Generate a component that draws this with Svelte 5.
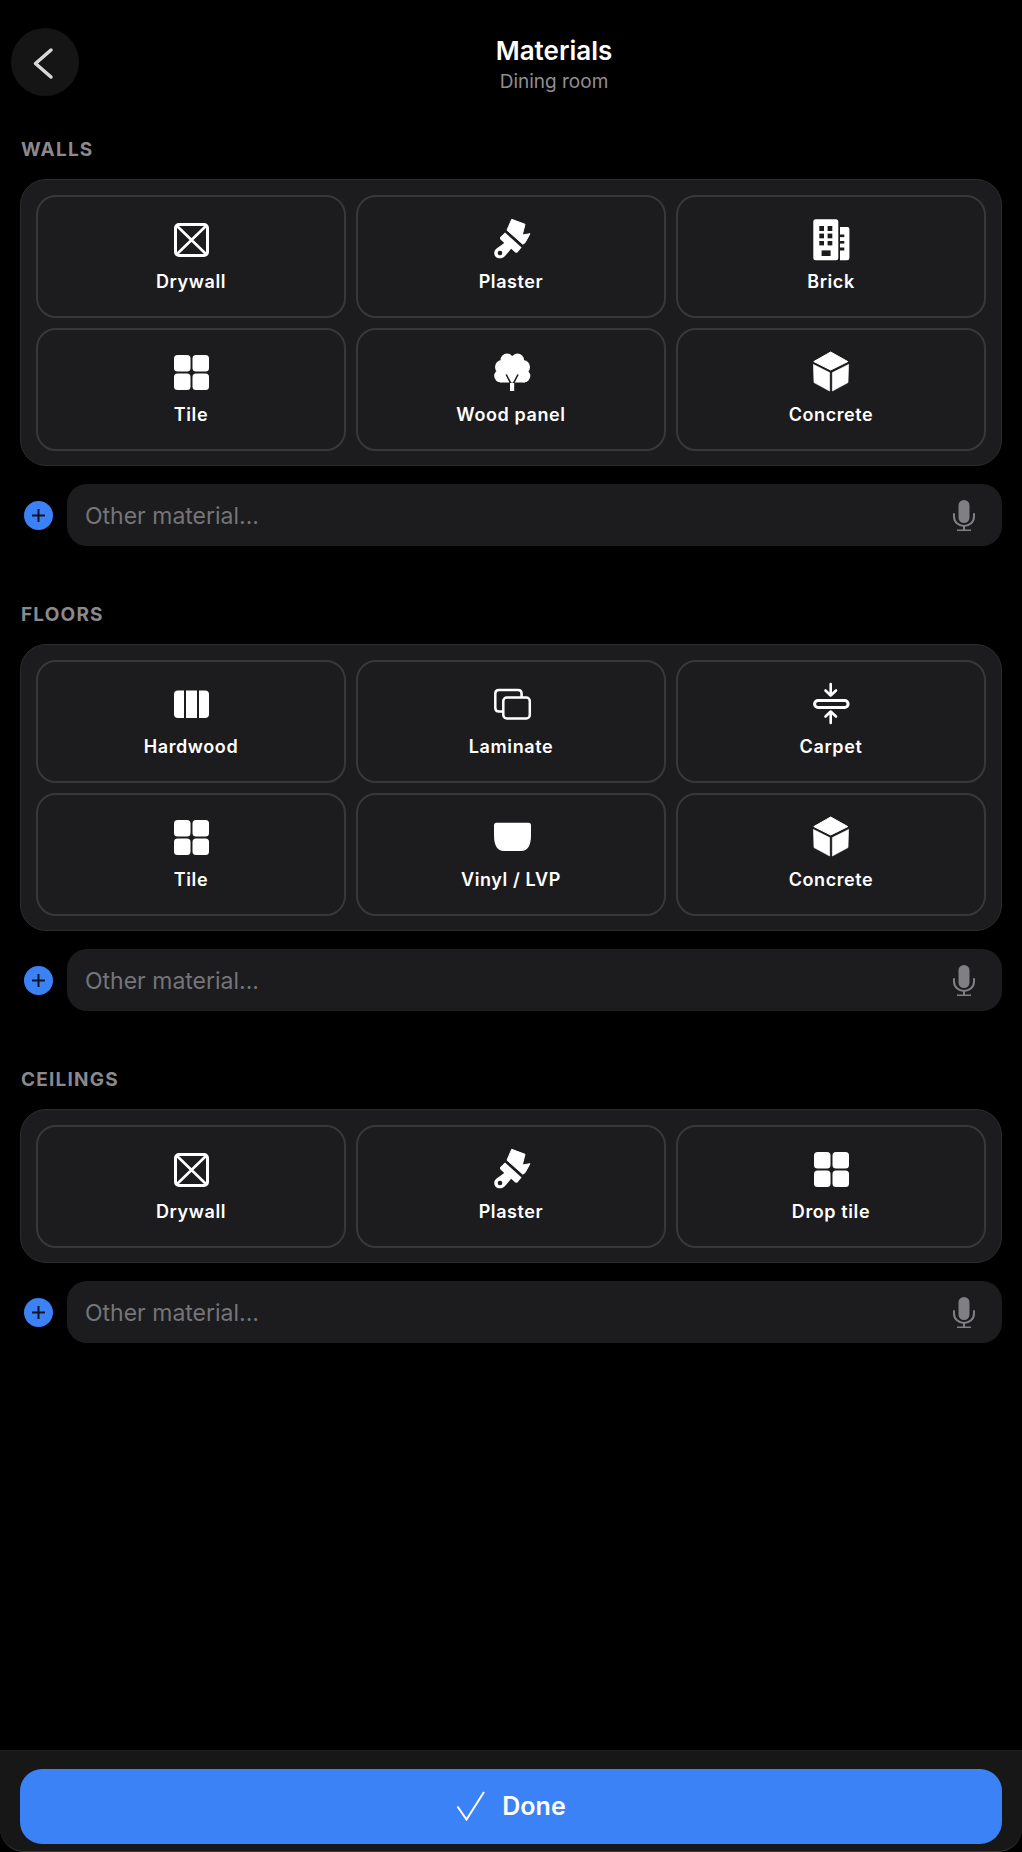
<script>
  const sections = [
    {
      title: "Walls",
      items: [
        { label: "Drywall", icon: "drywall" },
        { label: "Plaster", icon: "plaster" },
        { label: "Brick", icon: "brick" },
        { label: "Tile", icon: "tile" },
        { label: "Wood panel", icon: "tree" },
        { label: "Concrete", icon: "cube" }
      ]
    },
    {
      title: "Floors",
      items: [
        { label: "Hardwood", icon: "planks" },
        { label: "Laminate", icon: "laminate" },
        { label: "Carpet", icon: "carpet" },
        { label: "Tile", icon: "tile" },
        { label: "Vinyl / LVP", icon: "vinyl" },
        { label: "Concrete", icon: "cube" }
      ]
    },
    {
      title: "Ceilings",
      items: [
        { label: "Drywall", icon: "drywall" },
        { label: "Plaster", icon: "plaster" },
        { label: "Drop tile", icon: "tile" }
      ]
    }
  ];
</script>

{#snippet icon(name)}
  <svg class="icon" viewBox="0 0 40 40" fill="#fff">
    {#if name === "drywall"}
      <rect x="4.500" y="4.500" width="32" height="31" rx="3.500" fill="none" stroke="#fff" stroke-width="3" />
      <path d="M5 5l31 30M36 5L5 35" fill="none" stroke="#fff" stroke-width="2.600" />
    {:else if name === "plaster"}
      <path d="M20.700 -0.700L34 4.300L31.300 15L39 13.700L34 22.700L31.800 24.200L16 10.200z" stroke="#fff" stroke-width="1" stroke-linejoin="round" />
      <path d="M14 12.500L30.600 27.500L26.600 32.200C26 32.900 25 33 24.300 32.400L20.200 28.800L14 36C11.500 39 6.500 39 4.400 36.400C2.400 34 3 30.400 5.600 28.600L13.200 23L9.500 19.400C8.800 18.700 8.800 17.700 9.400 17z" />
      <circle cx="9" cy="33" r="2.300" fill="#1c1c1e" />
    {:else if name === "brick"}
      <rect x="2.300" y="-0.700" width="25" height="41" rx="2.500" />
      <path d="M29 7H36.500Q38.400 7 38.400 9V38Q38.400 40.300 36 40.300H29z" />
      <g fill="#1c1c1e">
        <rect x="8.300" y="6" width="4.700" height="5" />
        <rect x="16.600" y="6" width="4.700" height="5" />
        <rect x="8.300" y="13.600" width="4.700" height="4.700" />
        <rect x="16.600" y="13.600" width="4.700" height="4.700" />
        <rect x="8.300" y="21" width="4.700" height="4.400" />
        <rect x="16.600" y="21" width="4.700" height="4.400" />
        <rect x="10.600" y="30.400" width="9" height="5.600" />
        <rect x="29" y="14.500" width="4.300" height="2.600" />
        <rect x="29" y="21" width="4.300" height="2.600" />
        <rect x="29" y="27.500" width="4.300" height="3" />
      </g>
    {:else if name === "tile"}
      <rect x="3" y="2" width="16.500" height="16.500" rx="3.500" />
      <rect x="21.500" y="2" width="16.500" height="16.500" rx="3.500" />
      <rect x="3" y="20.500" width="16.500" height="16.500" rx="3.500" />
      <rect x="21.500" y="20.500" width="16.500" height="16.500" rx="3.500" />
    {:else if name === "tree"}
      <circle cx="16" cy="7" r="6.500" />
      <circle cx="26.500" cy="7" r="6.500" />
      <circle cx="11" cy="14" r="7" />
      <circle cx="32" cy="14" r="7" />
      <circle cx="21" cy="15" r="12" />
      <circle cx="9.500" cy="23" r="6.300" />
      <circle cx="33" cy="23" r="6.300" />
      <rect x="9" y="18" width="25" height="11.500" />
      <path d="M15.200 21.500L19.300 29.500V31H22.900V29.500L27 21.500" fill="none" stroke="#1c1c1e" stroke-width="1.600" />
      <path d="M19 38V30H23.200V38z" />
    {:else if name === "cube"}
      <path d="M19.700 -1L36.800 8.600L19.700 17L2.800 8.600z" stroke="#fff" stroke-width="1" stroke-linejoin="round" />
      <path d="M2.400 11.400L18.600 19.600V38L3 29.600z" stroke="#fff" stroke-width=".6" stroke-linejoin="round" />
      <path d="M37.600 11.400L21.400 19.600V38L37 29.600z" stroke="#fff" stroke-width=".6" stroke-linejoin="round" />
    {:else if name === "planks"}
      <path d="M7 5.500H13V33H7Q3 33 3 29V9.500Q3 5.500 7 5.500z" />
      <rect x="15" y="5.500" width="11" height="27.500" />
      <path d="M28 5.500H34Q38 5.500 38 9.500V29Q38 33 34 33H28z" />
    {:else if name === "laminate"}
      <path d="M12 26.500H8Q4.300 26.500 4.300 23V8.500Q4.300 5 8 5H27Q30.600 5 30.600 8.500V12" fill="none" stroke="#fff" stroke-width="2.500" />
      <rect x="12.300" y="12.500" width="26.500" height="21" rx="3.500" fill="none" stroke="#fff" stroke-width="2.500" />
    {:else if name === "carpet"}
      <g fill="none" stroke="#fff" stroke-width="2.600" stroke-linecap="round" stroke-linejoin="round">
        <path d="M19.700 -1V10M14.500 5.500L19.700 10.500L25 5.500" />
        <rect x="3.600" y="15.500" width="33.500" height="7" rx="3.500" stroke-width="3" />
        <path d="M19.700 38V27M14.500 31.500L19.700 26.500L25 31.500" />
      </g>
    {:else if name === "vinyl"}
      <path d="M5.500 4.700H37.500Q40 4.700 40 7.200V17Q40 33 30 33H13Q3 33 3 17V7.200Q3 4.700 5.500 4.700z" />
    {/if}
  </svg>
{/snippet}

<div class="page">
  <header class="header">
    <button class="back" aria-label="Back">
      <svg width="68" height="68" viewBox="0 0 68 68" fill="none">
        <path d="M40 22L24.500 35.500L40 49" stroke="#d8d8d8" stroke-width="3.500" stroke-linecap="round" stroke-linejoin="round" />
      </svg>
    </button>
    <div class="heading">
      <h1>Materials</h1>
      <p>Dining room</p>
    </div>
  </header>

  {#each sections as section}
    <section class="section">
      <h2>{section.title}</h2>
      <div class="panel">
        {#each section.items as item}
          <button class="tile">
            {@render icon(item.icon)}
            <span>{item.label}</span>
          </button>
        {/each}
      </div>
      <div class="other">
        <span class="plus">
          <svg width="15" height="15" viewBox="0 0 15 15">
            <path d="M7.500 1V14M1 7.500H14" stroke="#0c1526" stroke-width="2" />
          </svg>
        </span>
        <div class="field">
          <input placeholder="Other material..." />
          <svg class="mic" width="24" height="32" viewBox="0 0 24 32" fill="none">
            <rect x="6.500" y="1" width="11" height="23" rx="5.500" fill="#808084" />
            <path d="M2 15V17.500C2 23 6.500 27 12 27C17.500 27 22 23 22 17.500V15" stroke="#808084" stroke-width="2" stroke-linecap="round" />
            <path d="M12 27V31M5 31.500H19" stroke="#808084" stroke-width="2" />
          </svg>
        </div>
      </div>
    </section>
  {/each}

  <footer class="footer">
    <button class="done">
      <svg width="30" height="30" viewBox="0 0 30 30" fill="none">
        <path d="M1.500 15.500L10.500 28.500L28 1" stroke="#fff" stroke-width="2" stroke-linejoin="miter" />
      </svg>
      Done
    </button>
  </footer>
</div>

<style>
  :global(body) {
    background: #000;
  }

  .page {
    min-height: 1852px;
    display: flex;
    flex-direction: column;
    background: #000;
    font-family: Inter, "Liberation Sans", sans-serif;
    color: #fff;
  }

  button {
    font-family: inherit;
    color: inherit;
    padding: 0;
    border: none;
    background: none;
  }

  .header {
    display: flex;
    gap: 7px;
    padding: 28px 0 0 11px;
    height: 138px;
    box-sizing: border-box;
  }

  .back {
    width: 68px;
    height: 68px;
    border-radius: 50%;
    background: #151515;
    flex: none;
  }

  .back svg {
    display: block;
  }

  .heading {
    flex: 1;
    text-align: center;
    padding-top: 7px;
  }

  h1 {
    margin: 0;
    font-size: 26px;
    line-height: 32px;
    font-weight: 600;
  }

  .heading p {
    margin: 4px 0 0;
    font-size: 19px;
    line-height: 22px;
    color: #8e8e93;
  }

  .section {
    padding: 0 20px;
    margin-bottom: 57px;
  }

  h2 {
    margin: 0 0 18px 1px;
    font-size: 19px;
    line-height: 23px;
    font-weight: 700;
    letter-spacing: 1.2px;
    text-transform: uppercase;
    color: #8a8a8e;
  }

  .panel {
    display: grid;
    grid-template-columns: repeat(3, 1fr);
    gap: 10px;
    padding: 15px 15px 14px;
    border: 1px solid #2c2c2e;
    border-radius: 26px;
    background: #1c1c1e;
  }

  .tile {
    height: 123px;
    box-sizing: border-box;
    display: flex;
    flex-direction: column;
    align-items: center;
    padding-top: 23px;
    border: 2px solid #38383a;
    border-radius: 20px;
    background: #1c1c1e;
  }

  .icon {
    display: block;
    width: 40px;
    height: 40px;
    overflow: visible;
  }

  .tile span {
    margin-top: 10px;
    font-size: 18px;
    line-height: 24px;
    font-weight: 600;
    letter-spacing: .6px;
  }

  .other {
    display: flex;
    align-items: center;
    gap: 14px;
    margin-top: 18px;
    padding-left: 4px;
  }

  .plus {
    width: 29px;
    height: 29px;
    flex: none;
    display: flex;
    align-items: center;
    justify-content: center;
    border-radius: 50%;
    background: #3b82f6;
  }

  .field {
    flex: 1;
    height: 62px;
    display: flex;
    align-items: center;
    padding: 0 26px 0 18px;
    border-radius: 20px;
    background: #1c1c1e;
  }

  input {
    flex: 1;
    min-width: 0;
    padding: 2px 0 0;
    border: none;
    outline: none;
    background: none;
    font-family: inherit;
    font-size: 23px;
    color: #fff;
  }

  input::placeholder {
    color: #757578;
    opacity: 1;
  }

  .footer {
    margin-top: auto;
    height: 102px;
    box-sizing: border-box;
    padding: 18px 20px 0;
    background: #171717;
    border-top: 1px solid #1f1f1f;
    border-bottom: 1px solid #3a3a3a;
    border-radius: 0 0 24px 24px;
  }

  .done {
    width: 100%;
    height: 75px;
    display: flex;
    align-items: center;
    justify-content: center;
    gap: 16px;
    padding-bottom: 1px;
    border-radius: 22px;
    background: #3b82f6;
    font-size: 25px;
    font-weight: 600;
  }
</style>
